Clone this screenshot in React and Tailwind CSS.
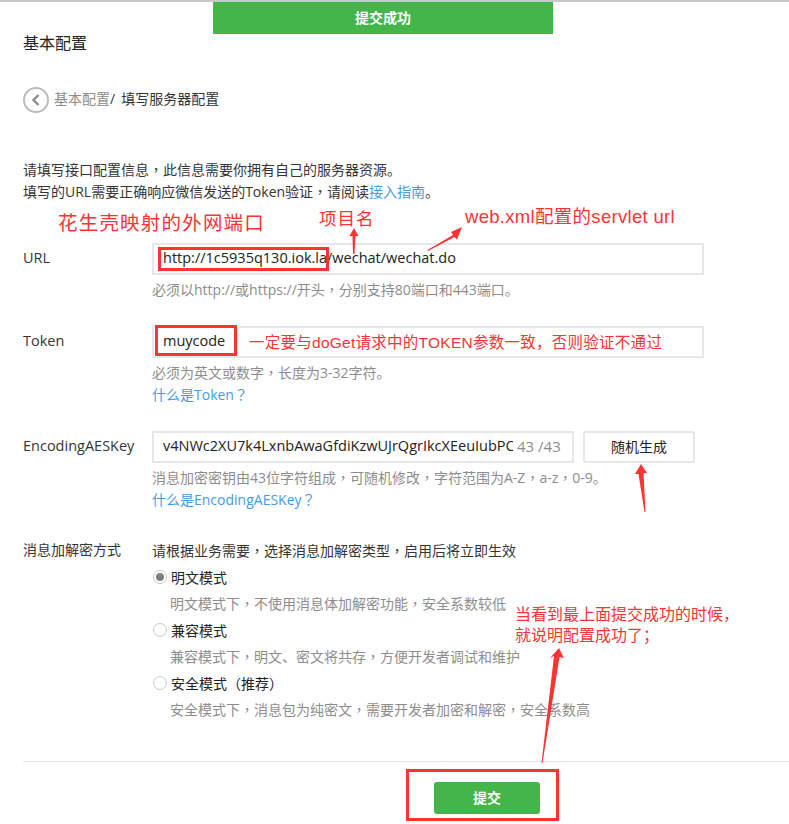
const font = { fontFamily: '"Open Sans", "Noto Sans CJK SC", sans-serif' };
const noteFont = { fontFamily: '"Liberation Sans", "Noto Sans CJK SC", sans-serif' };

function Zh({ text }) {
  return text.split(/([，？（）])/).map((part, i) =>
    i % 2 ? (
      <span key={i} className="font-['Noto_Sans_CJK_TC']">{part}</span>
    ) : (
      part
    )
  );
}

function Line({ className = "", text, children }) {
  return (
    <div className={"h-[22px] text-[14px] leading-[22px] " + className}>
      {text ? <Zh text={text} /> : children}
    </div>
  );
}

function Row({ label, labelClass = "", className = "", children }) {
  return (
    <div className={"flex " + className}>
      <div className={"w-[129px] shrink-0 leading-[22px] text-[#353535] " + labelClass}>{label}</div>
      <div className="flex-1 min-w-0">{children}</div>
    </div>
  );
}

function Radio({ checked, label, desc }) {
  return (
    <div>
      <div className="flex items-center h-[22px] text-[14px] text-[#222]">
        <span className="w-[14px] h-[14px] ml-[1px] rounded-full border border-[#ccc] flex items-center justify-center">
          {checked && <span className="w-[8px] h-[8px] rounded-full bg-[#808080]" />}
        </span>
        <span className="ml-[4px]"><Zh text={label} /></span>
      </div>
      <Line className="ml-[18px] mt-[4px] text-[#8d8d8d]" text={desc} />
    </div>
  );
}

function Note({ className, children }) {
  return <div className={"absolute whitespace-nowrap text-[#ff3333] " + className} style={noteFont}>{children}</div>;
}

function RedBox({ className }) {
  return <div className={"absolute border-[3px] border-[#ff3333] " + className} />;
}

export default function App() {
  return (
    <div className="relative w-[789px] h-[824px] overflow-hidden bg-white" style={font}>
      <div className="h-[2px] bg-[#c8c8c8]" />
      <div className="ml-[213px] w-[340px] h-[32px] bg-[#44b549] flex items-center justify-center pb-[2px] text-[14px] font-bold text-white">
        提交成功
      </div>

      <div className="pl-[23px]">
        <div className="mt-[-3px] h-[24px] text-[16px] leading-[24px] text-[#222]">基本配置</div>

        <div className="mt-[32px] flex items-center h-[26px] text-[14px]">
          <span className="w-[26px] h-[26px] rounded-full border-2 border-[#bdbdbd] flex items-center justify-center">
            <svg width="12" height="14" viewBox="0 0 12 14" fill="none" stroke="#8d8d8d" strokeWidth="2.4">
              <path d="M8.5 2 L3.5 7 L8.5 12" />
            </svg>
          </span>
          <span className="ml-[5px] pb-[4px] text-[#8d8d8d]">基本配置</span>
          <span className="pb-[4px] text-[#353535]">/</span>
          <span className="ml-[6px] pb-[4px] text-[#353535]">填写服务器配置</span>
        </div>

        <div className="mt-[45px] text-[#353535]">
          <Line text="请填写接口配置信息，此信息需要你拥有自己的服务器资源。" />
          <Line>
            <Zh text="填写的URL需要正确响应微信发送的Token验证，请阅读" /><span className="text-[#459ae9]">接入指南</span>。
          </Line>
        </div>

        <Row label="URL" className="mt-[41px]" labelClass="pt-[4px] text-[14.5px]">
          <div className="w-[552px] h-[32px] border-2 border-[#e7e7eb] pl-[9px] pb-[2px] flex items-center text-[14.5px] text-[#222]">
            http://1c5935q130.iok.la/wechat/wechat.do
          </div>
          <Line className="mt-[3px] text-[#8d8d8d]" text="必须以http://或https://开头，分别支持80端口和443端口。" />
        </Row>

        <Row label="Token" className="mt-[26px]" labelClass="pt-[4px] text-[14.5px]">
          <div className="w-[552px] h-[32px] border-2 border-[#e7e7eb] pl-[9px] pb-[2px] flex items-center text-[14.5px] text-[#222]">
            muycode
          </div>
          <Line className="mt-[3px] text-[#8d8d8d]" text="必须为英文或数字，长度为3-32字符。" />
          <Line className="text-[#459ae9]" text="什么是Token？" />
        </Row>

        <Row label="EncodingAESKey" className="mt-[26px]" labelClass="pt-[4px] text-[14.5px]">
          <div className="flex gap-[9px]">
            <div className="w-[422px] h-[32px] border-2 border-[#e7e7eb] pl-[9px] pr-[9px] pb-[2px] flex items-center text-[14.5px] text-[#222]">
              <span className="w-[350px] shrink-0 overflow-hidden whitespace-nowrap">v4NWc2XU7k4LxnbAwaGfdiKzwUJrQgrIkcXEeuIubPC</span>
              <span className="ml-[4px] whitespace-nowrap text-[15px] text-[#8d8d8d]">43 /43</span>
            </div>
            <div className="w-[112px] h-[32px] border-2 border-[#e7e7eb] rounded-[3px] pb-[2px] flex items-center justify-center text-[14px] text-[#222]">
              随机生成
            </div>
          </div>
          <Line className="mt-[3px] text-[#8d8d8d]" text="消息加密密钥由43位字符组成，可随机修改，字符范围为A-Z，a-z，0-9。" />
          <Line className="text-[#459ae9]" text="什么是EncodingAESKey？" />
        </Row>

        <Row label="消息加解密方式" className="mt-[29px]" labelClass="text-[14px]">
          <Line className="text-[#353535]" text="请根据业务需要，选择消息加解密类型，启用后将立即生效" />
          <div className="mt-[5px] flex flex-col gap-[5px]">
            <Radio checked label="明文模式" desc="明文模式下，不使用消息体加解密功能，安全系数较低" />
            <Radio label="兼容模式" desc="兼容模式下，明文、密文将共存，方便开发者调试和维护" />
            <Radio label="安全模式（推荐）" desc="安全模式下，消息包为纯密文，需要开发者加密和解密，安全系数高" />
          </div>
        </Row>

        <div className="mt-[41px] h-px bg-[#e7e7eb]" />
        <div className="mt-[20px] ml-[411px] w-[106px] h-[32px] rounded-[3px] bg-[#44b549] pb-[2px] flex items-center justify-center text-[14px] font-bold text-white">
          提交
        </div>
      </div>

      <RedBox className="left-[158px] top-[247px] w-[171px] h-[24px]" />
      <RedBox className="left-[155px] top-[325px] w-[82px] h-[31px]" />
      <RedBox className="left-[406px] top-[769px] w-[153px] h-[52px]" />

      <Note className="left-[58px] top-[209px] text-[19.5px] leading-[28px] tracking-[1.2px]">花生壳映射的外网端口</Note>
      <Note className="left-[319px] top-[206px] text-[17.5px] leading-[26px] tracking-[1px]">项目名</Note>
      <Note className="left-[465px] top-[204px] text-[18.5px] leading-[26px] tracking-[0.3px]">web.xml配置的servlet url</Note>
      <Note className="left-[249px] top-[331px] text-[15.5px] leading-[24px] tracking-[0.26px]">一定要与doGet请求中的TOKEN参数一致，否则验证不通过</Note>
      <Note className="left-[515px] top-[604px] text-[16px] leading-[21px]">
        当看到最上面提交成功的时候，
        <br />
        就说明配置成功了；
      </Note>

      <svg className="absolute left-0 top-0 pointer-events-none" width="789" height="824" fill="#ff3333">
        <polygon points="354,228 358.5,236 355.5,236 354.5,254 353,254 352.5,236 349.5,236" />
        <polygon points="462,227 451,232 453,235 427.5,250 428,251 454.5,237 457,239.5" />
        <polygon points="641,464 647,473 643.5,473 645.5,512 644.5,512 638.5,474 635,474" />
        <polygon points="559,648 564,658 559.5,657 542.5,763 541.5,763 554,656 550,658" />
      </svg>
    </div>
  );
}
